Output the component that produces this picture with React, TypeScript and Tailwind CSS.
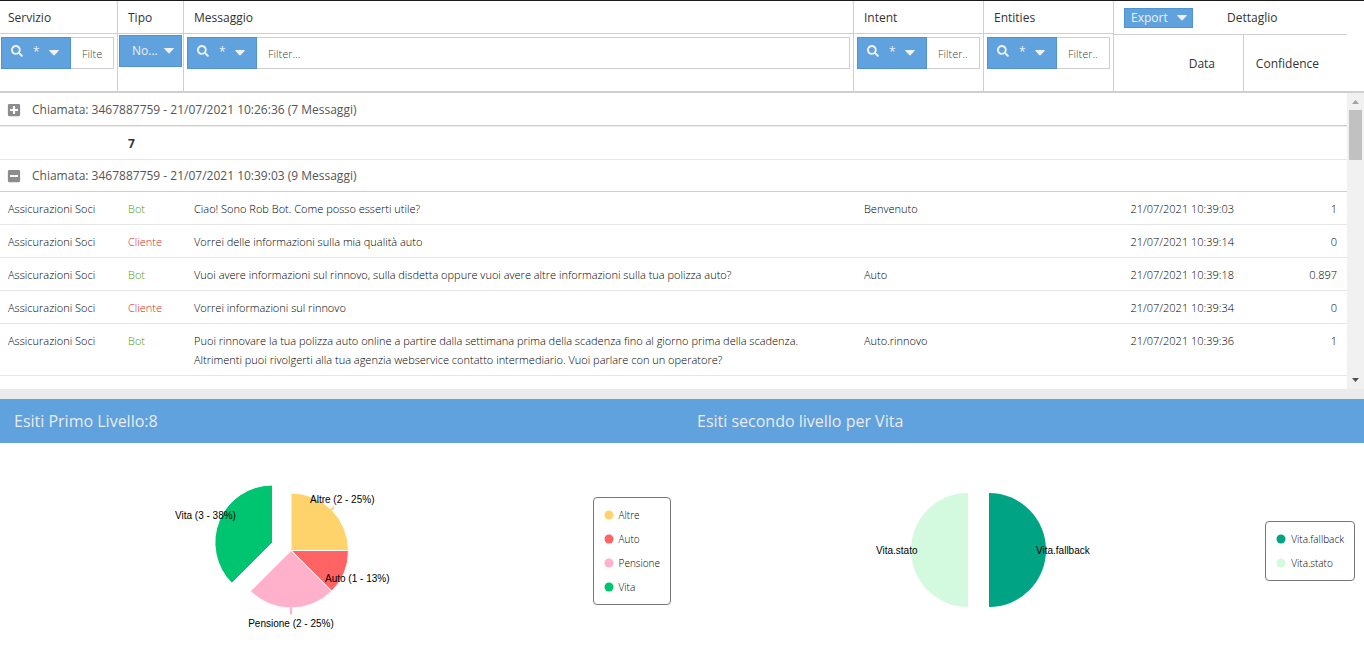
import type { ReactNode } from 'react';
import { FaMinusSquare, FaPlusSquare, FaSearch } from 'react-icons/fa';

type Message = {
  type: 'Bot' | 'Cliente';
  text: string;
  intent?: string;
  date: string;
  confidence: string;
};

const messages: Message[] = [
  { type: 'Bot', text: 'Ciao! Sono Rob Bot. Come posso esserti utile?', intent: 'Benvenuto', date: '21/07/2021 10:39:03', confidence: '1' },
  { type: 'Cliente', text: 'Vorrei delle informazioni sulla mia qualità auto', date: '21/07/2021 10:39:14', confidence: '0' },
  { type: 'Bot', text: 'Vuoi avere informazioni sul rinnovo, sulla disdetta oppure vuoi avere altre informazioni sulla tua polizza auto?', intent: 'Auto', date: '21/07/2021 10:39:18', confidence: '0.897' },
  { type: 'Cliente', text: 'Vorrei informazioni sul rinnovo', date: '21/07/2021 10:39:34', confidence: '0' },
  { type: 'Bot', text: 'Puoi rinnovare la tua polizza auto online a partire dalla settimana prima della scadenza fino al giorno prima della scadenza. Altrimenti puoi rivolgerti alla tua agenzia webservice contatto intermediario. Vuoi parlare con un operatore?', intent: 'Auto.rinnovo', date: '21/07/2021 10:39:36', confidence: '1' },
];

const firstLevel = [
  { label: 'Altre', color: '#ffd36b' },
  { label: 'Auto', color: '#ff6363' },
  { label: 'Pensione', color: '#ffb1cb' },
  { label: 'Vita', color: '#00c570' },
];

const secondLevel = [
  { label: 'Vita.fallback', color: '#00a383' },
  { label: 'Vita.stato', color: '#d3f9df' },
];

function Columns() {
  return (
    <colgroup>
      <col className="w-[118px]" />
      <col className="w-[66px]" />
      <col />
      <col className="w-[130px]" />
      <col className="w-[130px]" />
      <col className="w-[130px]" />
      <col className="w-[103px]" />
    </colgroup>
  );
}

function Caret() {
  return (
    <svg width="10" height="6" viewBox="0 0 10 6" fill="currentColor" aria-hidden="true">
      <path d="M0.6 0h8.8q.8.2.3.8L5.5 5.2q-.5.4-1 0L.3.8Q-.2.2.6 0z" />
    </svg>
  );
}

function TextFilter({ name }: { name: string }) {
  return (
    <div className="flex h-8">
      <button
        type="button"
        aria-label={`Operatore filtro ${name}`}
        className="flex w-[70px] shrink-0 items-center border border-[#4f93d0] bg-[#5fa2dd] pb-1 pl-[9px] text-[#f0f0f0]"
      >
        <FaSearch size={12} />
        <span className="ml-[10px] w-3 pt-px text-left text-xs">*</span>
        <span className="mt-1 ml-1">
          <Caret />
        </span>
      </button>
      <input
        type="text"
        aria-label={`Filtro ${name}`}
        placeholder="Filter..."
        className="w-0 min-w-0 grow border border-l-0 border-[#cfcfcf] px-[11px] pt-[2px] text-[11px] font-light outline-none placeholder:text-[#444]"
      />
    </div>
  );
}

function HeadCell({ children }: { children: ReactNode }) {
  return <th className="border-r border-b border-[#cfcfcf] px-2 pt-[2px] text-left font-normal [&:not(:first-child)]:px-[10px]">{children}</th>;
}

function GridHeader() {
  return (
    <div className="border-t border-b-2 border-t-[#1b1b1b] border-b-[#cfcfcf] pr-[17px]">
      <table className="w-full table-fixed border-separate border-spacing-0 text-xs text-[#333]">
        <Columns />
        <thead>
          <tr className="h-[33px]">
            <HeadCell>Servizio</HeadCell>
            <HeadCell>Tipo</HeadCell>
            <HeadCell>Messaggio</HeadCell>
            <HeadCell>Intent</HeadCell>
            <HeadCell>Entities</HeadCell>
            <th colSpan={2} className="pl-[10px] font-normal">
              <div className="flex items-center gap-[34px]">
                <button type="button" className="flex h-5 w-[69px] items-center justify-between border border-[#4f93d0] bg-[#5fa2dd] pr-[5px] pl-[6px] text-[#f0f0f0]">
                  Export
                  <Caret />
                </button>
                Dettaglio
              </div>
            </th>
          </tr>
          <tr className="h-[57px]">
            <td className="border-r border-[#cfcfcf] pt-[3px] pr-[3px] pl-px align-top">
              <TextFilter name="Servizio" />
            </td>
            <td className="border-r border-[#cfcfcf] px-px pt-px align-top">
              <button type="button" aria-haspopup="listbox" className="flex h-8 w-full items-center justify-between border border-[#4f93d0] bg-[#5fa2dd] pr-[7px] pl-3 text-[#f0f0f0]">
                No...
                <Caret />
              </button>
            </td>
            <td className="border-r border-[#cfcfcf] px-[3px] pt-[3px] align-top">
              <TextFilter name="Messaggio" />
            </td>
            <td className="border-r border-[#cfcfcf] px-[3px] pt-[3px] align-top">
              <TextFilter name="Intent" />
            </td>
            <td className="border-r border-[#cfcfcf] px-[3px] pt-[3px] align-top">
              <TextFilter name="Entities" />
            </td>
            <th className="border-t border-r border-[#cfcfcf] pt-[2px] pr-7 text-right font-normal">Data</th>
            <th className="border-t border-[#cfcfcf] pt-[2px] pr-7 text-right font-normal">Confidence</th>
          </tr>
        </thead>
      </table>
    </div>
  );
}

function GroupRow({ open, children }: { open?: boolean; children: ReactNode }) {
  return (
    <tr className="text-xs text-[#555]">
      <td colSpan={7} className="h-8 border-b border-[#cfcfcf] px-2">
        <div className="flex items-center gap-[11px]">
          <button type="button" aria-expanded={!!open} aria-label={open ? 'Comprimi' : 'Espandi'} className="-ml-px text-[#8c8c8c]">
            {open ? <FaMinusSquare size={14} /> : <FaPlusSquare size={14} />}
          </button>
          {children}
        </div>
      </td>
    </tr>
  );
}

function Scrollbar() {
  return (
    <div className="flex w-[17px] shrink-0 flex-col items-center bg-[#f1f1f1]">
      <svg width="17" height="17" viewBox="0 0 17 17" fill="#a3a3a3" aria-hidden="true">
        <path d="M5 11h7L8.500 7z" />
      </svg>
      <div className="h-[50px] w-[13px] bg-[#c1c1c1]" />
      <svg className="mt-auto" width="17" height="17" viewBox="0 0 17 17" fill="#505050" aria-hidden="true">
        <path d="M5 6h7L8.500 10z" />
      </svg>
    </div>
  );
}

function MessageGrid() {
  return (
    <div className="flex">
      <div className="grow pt-px pb-[13px]">
        <table className="w-full table-fixed border-separate border-spacing-0 text-[11px] leading-[19px] text-black">
          <Columns />
          <tbody>
            <GroupRow>Chiamata: 3467887759 - 21/07/2021 10:26:36 (7 Messaggi)</GroupRow>
            <tr className="[&>td]:border-t [&>td]:border-b [&>td]:border-t-[#ebebeb] [&>td]:border-b-[#e6e6e6]">
              <td className="h-[34px]" />
              <td className="px-[10px] pt-px text-xs font-bold text-[#333]">7</td>
              <td colSpan={5} />
            </tr>
            <GroupRow open>Chiamata: 3467887759 - 21/07/2021 10:39:03 (9 Messaggi)</GroupRow>
            {messages.map(m => (
              <tr key={m.date} className="align-top font-light [&>td]:border-b [&>td]:border-[#e6e6e6] [&>td]:px-[10px] [&>td]:pt-[7px] [&>td]:pb-[6px]">
                <td className="pl-2!">Assicurazioni Soci</td>
                <td className={m.type === 'Bot' ? 'text-[#4d9e00]' : 'text-[#d02a14]'}>{m.type}</td>
                <td>{m.text}</td>
                <td>{m.intent}</td>
                <td />
                <td className="text-right">{m.date}</td>
                <td className="text-right">{m.confidence}</td>
              </tr>
            ))}
          </tbody>
        </table>
      </div>
      <Scrollbar />
    </div>
  );
}

function Legend({ items }: { items: { label: string; color: string }[] }) {
  return (
    <ul className="mt-[14px] flex shrink-0 flex-col rounded border border-[#777] px-[10px] py-[5px] text-[10px] font-light text-black">
      {items.map(item => (
        <li key={item.label} className="flex h-6 items-center gap-[5px]">
          <svg width="10" height="10" viewBox="0 0 10 10" aria-hidden="true">
            <circle cx="5" cy="5" r="4.5" fill={item.color} />
          </svg>
          {item.label}
        </li>
      ))}
    </ul>
  );
}

function FirstLevelPie() {
  return (
    <svg width="260" height="202" viewBox="0 0 260 202" className="font-['Liberation_Sans',Arial,sans-serif] text-[10px]" role="img" aria-label="Esiti primo livello">
      <g stroke="#fff">
        <path d="M130 107.500V50a57.500 57.500 0 0 1 57.500 57.500z" fill="#ffd36b" />
        <path d="M130 107.500h57.500a57.500 57.500 0 0 1-16.800 40.700z" fill="#ff6363" />
        <path d="M130 107.500l40.700 40.700a57.500 57.500 0 0 1-81.400 0z" fill="#ffb1cb" />
        <path d="M111.500 99.500l-40.700 40.700A57.500 57.500 0 0 1 111.500 42z" fill="#00c570" />
      </g>
      <path d="M170 67l3-3" stroke="#ffd36b" strokeWidth="2" />
      <path d="M130 164.500v7" stroke="#ffb1cb" strokeWidth="2" />
      <text x="149" y="60">Altre (2 - 25%)</text>
      <text x="164" y="139">Auto (1 - 13%)</text>
      <text x="130" y="184" textAnchor="middle">Pensione (2 - 25%)</text>
      <text x="14" y="76">Vita (3 - 38%)</text>
    </svg>
  );
}

function SecondLevelPie() {
  return (
    <svg width="260" height="202" viewBox="0 0 260 202" className="font-['Liberation_Sans',Arial,sans-serif] text-[10px]" role="img" aria-label="Esiti secondo livello">
      <path d="M119 50v114a57 57 0 0 1 0-114z" fill="#d3f9df" />
      <path d="M140 50v114a57 57 0 0 0 0-114z" fill="#00a383" />
      <text x="27" y="111">Vita.stato</text>
      <text x="187" y="111">Vita.fallback</text>
    </svg>
  );
}

export default function App() {
  return (
    <main className="bg-white font-['Open_Sans',sans-serif]">
      <GridHeader />
      <MessageGrid />
      <div className="h-[10px] bg-[#ebebeb]" />

      <section className="grid grid-cols-2">
        <h2 className="bg-[#5fa2dd] px-[14px] text-base leading-[44px] text-[#ebebeb]">Esiti Primo Livello:8</h2>
        <h2 className="bg-[#5fa2dd] px-[15px] text-base leading-[44px] text-[#ebebeb]">Esiti secondo livello per Vita</h2>
        <div className="flex items-center pr-[11px]">
          <div className="flex grow justify-center pr-[11px]">
            <FirstLevelPie />
          </div>
          <Legend items={firstLevel} />
        </div>
        <div className="flex items-center pr-[9px]">
          <div className="flex grow justify-center pl-[11px]">
            <SecondLevelPie />
          </div>
          <Legend items={secondLevel} />
        </div>
      </section>
    </main>
  );
}
